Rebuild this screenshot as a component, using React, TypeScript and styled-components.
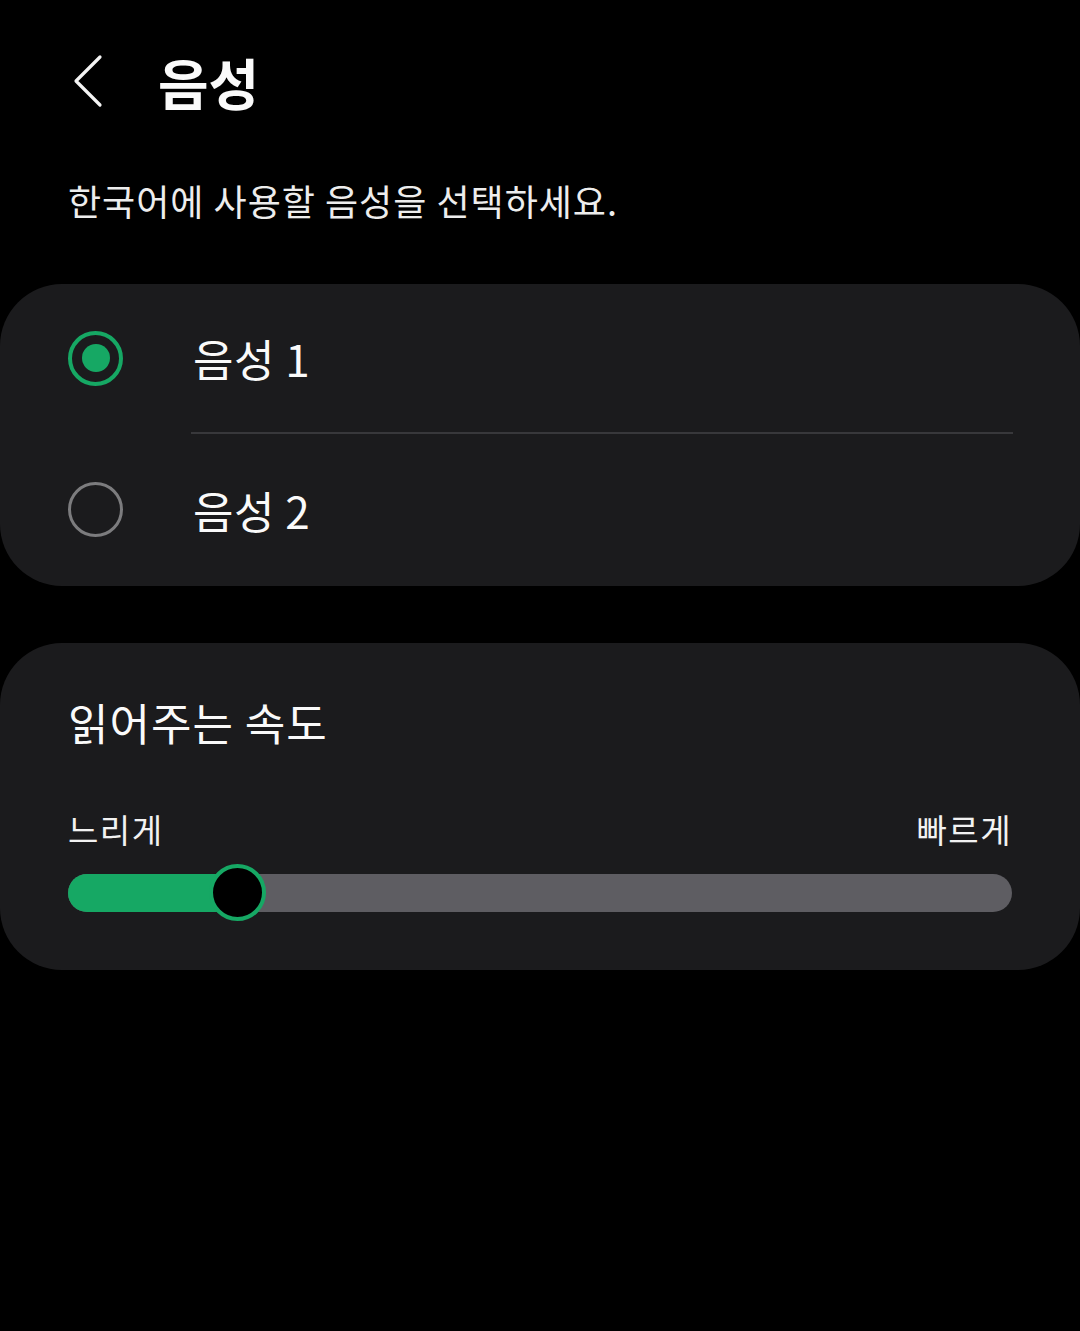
import React from "react";
import styled, { createGlobalStyle } from "styled-components";

const GlobalStyle = createGlobalStyle`
  html, body {
    margin: 0;
    padding: 0;
    background: #000;
  }
  body {
    font-family: "Noto Sans CJK KR", "Noto Sans", sans-serif;
    color: #f7f7f7;
  }
  * { box-sizing: border-box; }
`;

const Page = styled.div`
  width: 1080px;
  min-height: 1331px;
  background: #000;
  display: flex;
  flex-direction: column;
`;

const Header = styled.header`
  height: 162px;
  display: flex;
  align-items: center;
  padding-left: 70px;
`;

const BackButton = styled.button`
  width: 36px;
  height: 56px;
  padding: 0;
  border: none;
  background: transparent;
  display: flex;
  align-items: center;
  justify-content: center;
`;

const Title = styled.h1`
  margin: 0 0 0 52px;
  font-size: 55px;
  font-weight: 700;
  line-height: 64px;
  letter-spacing: 0;
  color: #fafafa;
`;

const Subtitle = styled.p`
  margin: 14px 0 0 68px;
  font-size: 36px;
  line-height: 48px;
  letter-spacing: 1px;
  font-weight: 400;
  color: #ededed;
`;

const Card = styled.section<{ $mt: number }>`
  margin-top: ${(p) => p.$mt}px;
  background: #1b1b1d;
  border-radius: 62px;
  display: flex;
  flex-direction: column;
`;

const OptionRow = styled.label<{ $h: number }>`
  height: ${(p) => p.$h}px;
  display: flex;
  align-items: center;
  padding-left: 68px;
  cursor: pointer;
`;

const Radio = styled.span<{ $checked: boolean }>`
  width: 55px;
  height: 55px;
  border-radius: 50%;
  border: ${(p) => (p.$checked ? "4.5px solid #16a864" : "3px solid #7c7c7e")};
  display: flex;
  align-items: center;
  justify-content: center;
  flex-shrink: 0;
`;

const RadioDot = styled.span`
  width: 28px;
  height: 28px;
  border-radius: 50%;
  background: #16a864;
`;

const OptionLabel = styled.span`
  margin-left: 70px;
  font-size: 44px;
  line-height: 56px;
  letter-spacing: 0.5px;
  color: #fafafa;
`;

const Divider = styled.div`
  height: 1.5px;
  margin: 0 67px 0 191px;
  background: #38383b;
`;

const SpeedBody = styled.div`
  padding: 0 68px 47px;
  display: flex;
  flex-direction: column;
`;

const SectionTitle = styled.h2`
  margin: 49px 0 0;
  font-size: 44px;
  font-weight: 400;
  line-height: 60px;
  letter-spacing: 1px;
  color: #fafafa;
`;

const LabelRow = styled.div`
  margin-top: 55px;
  display: flex;
  justify-content: space-between;
  font-size: 33px;
  line-height: 44px;
  letter-spacing: 1.5px;
  color: #f2f2f2;
`;

const SliderArea = styled.div`
  margin-top: 12px;
  height: 60px;
  display: flex;
  align-items: center;
  position: relative;
`;

const Track = styled.div`
  width: 100%;
  height: 38px;
  border-radius: 19px;
  background: #5e5d62;
  overflow: hidden;
  display: flex;
`;

const Fill = styled.div`
  height: 100%;
  background: #16a864;
`;

const Thumb = styled.div`
  position: absolute;
  top: 50%;
  width: 57px;
  height: 57px;
  margin-left: -28.5px;
  margin-top: -28.5px;
  border-radius: 50%;
  background: #000;
  border: 4px solid #16a864;
`;

const options = [
  { label: "음성 1", checked: true, h: 148 },
  { label: "음성 2", checked: false, h: 152 },
];

export default function App() {
  const value = 0.18;
  return (
    <Page>
      <GlobalStyle />
      <Header>
        <BackButton aria-label="뒤로">
          <svg width="36" height="56" viewBox="0 0 36 56" fill="none">
            <path
              d="M30 4 L6 28 L30 52"
              stroke="#f5f5f5"
              strokeWidth="3.2"
              strokeLinecap="round"
              strokeLinejoin="round"
            />
          </svg>
        </BackButton>
        <Title>음성</Title>
      </Header>
      <Subtitle>한국어에 사용할 음성을 선택하세요.</Subtitle>

      <Card $mt={60}>
        {options.map((o, i) => (
          <React.Fragment key={o.label}>
            {i > 0 && <Divider />}
            <OptionRow $h={o.h}>
              <Radio $checked={o.checked}>{o.checked && <RadioDot />}</Radio>
              <OptionLabel>{o.label}</OptionLabel>
            </OptionRow>
          </React.Fragment>
        ))}
      </Card>

      <Card $mt={57}>
        <SpeedBody>
          <SectionTitle>읽어주는 속도</SectionTitle>
          <LabelRow>
            <span>느리게</span>
            <span>빠르게</span>
          </LabelRow>
          <SliderArea>
            <Track>
              <Fill style={{ width: `${value * 100}%` }} />
            </Track>
            <Thumb style={{ left: `${value * 100}%` }} />
          </SliderArea>
        </SpeedBody>
      </Card>
    </Page>
  );
}
